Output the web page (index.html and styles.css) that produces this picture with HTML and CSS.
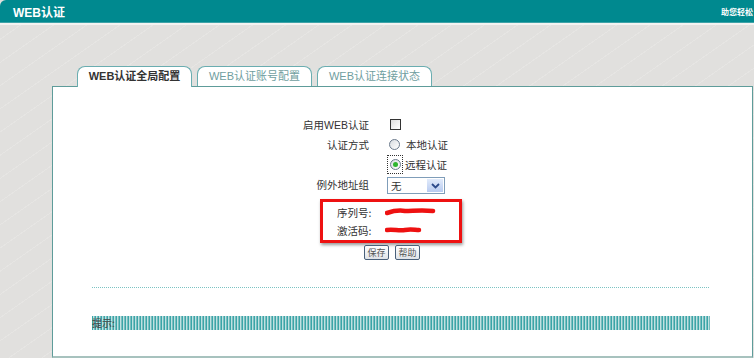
FILE: index.html
```html
<!DOCTYPE html>
<html>
	<head>
		<meta charset="UTF-8">
		<title>WEB认证</title>
		<link rel="stylesheet" href="styles.css">
	</head>
	<body>
		<div class="top">
			<span class="title">WEB认证</span>
			<span class="slogan">助您轻松</span>
		</div>
		<div class="main">
			<ul class="tabs">
				<li class="current">WEB认证全局配置</li>
				<li>WEB认证账号配置</li>
				<li>WEB认证连接状态</li>
			</ul>
			<div class="panel">
				<div class="form">
					<div class="lab">启用WEB认证</div>
					<div class="ctl"><span class="chk"></span></div>
					<div class="lab">认证方式</div>
					<div class="ctl"><span class="radio"></span><span class="opt">本地认证</span></div>
					<div class="lab"></div>
					<div class="ctl"><span class="focus"><span class="radio on"></span></span><span class="opt">远程认证</span></div>
					<div class="lab">例外地址组</div>
					<div class="ctl">
						<span class="sel"><span class="val">无</span><span class="arr"><svg width="9" height="6" viewBox="0 0 9 6"><path d="M1 1 L4.5 4.5 L8 1" fill="none" stroke="#2c4a8a" stroke-width="1.8"/></svg></span></span>
					</div>
				</div>
				<div class="license">
					<div class="row">
						<span class="k">序列号:</span>
						<svg width="52" height="8" viewBox="0 0 52 8"><path d="M2 5 C8 3 14 2 20 3 C28 3 36 2 48 3" fill="none" stroke="#ee1111" stroke-width="4.5" stroke-linecap="round"/></svg>
					</div>
					<div class="row">
						<span class="k">激活码:</span>
						<svg width="52" height="8" viewBox="0 0 52 8"><path d="M2 4 C8 3 14 5 20 4 C26 3 30 4 34 4" fill="none" stroke="#ee1111" stroke-width="4.5" stroke-linecap="round"/></svg>
					</div>
				</div>
				<div class="btns">
					<span class="btn">保存</span>
					<span class="btn">帮助</span>
				</div>
				<div class="dots"></div>
				<div class="hint">提示:</div>
			</div>
		</div>
	</body>
</html>
```
FILE: styles.css
```css
*{
	padding: 0;
	margin: 0;
}
body{
	width: 754px;
	height: 358px;
	overflow: hidden;
	background: #e1e0de;
	font-family: "Noto Sans CJK SC", "Liberation Sans", sans-serif;
	font-size: 11px;
	color: #333;
}
ul{
	list-style: none;
}
.top{
	height: 22px;
	background: #00898f;
	border-top-left-radius: 6px;
	border-bottom: 1px solid #3fa3a8;
	display: flex;
	align-items: center;
	color: white;
}
.title{
	margin-left: 13px;
	font-family: "Liberation Sans", "Noto Sans CJK SC", sans-serif;
	font-weight: bold;
	font-size: 12px;
}
.slogan{
	margin-left: auto;
	margin-right: 1px;
	font-size: 8px;
	font-weight: bold;
	white-space: nowrap;
}
.main{
	border-top: 2px solid #f3f3f1;
	padding-top: 41px;
	height: 292px;
	background: repeating-linear-gradient(-35deg, #e1e0de 0 9px, #e6e5e3 9px 10px, #e1e0de 10px 19px);
}
.tabs{
	display: flex;
	gap: 5px;
	margin-left: 77px;
	position: relative;
	z-index: 1;
}
.tabs li{
	width: 113px;
	height: 19px;
	border: 1px solid #6aadb0;
	border-bottom: none;
	border-radius: 8px 8px 0 0;
	background: white;
	text-align: center;
	line-height: 19px;
	color: #6f9ea0;
	font-family: "Liberation Sans", "Noto Sans CJK SC", sans-serif;
}
.tabs li.current{
	color: #333;
	font-weight: bold;
	height: 20px;
	margin-bottom: -1px;
}
.panel{
	margin-left: 52px;
	width: 699px;
	height: 269px;
	background: white;
	border: 1px solid #5e9c9a;
	border-bottom: 2px solid #a7c2be;
}
.form{
	display: grid;
	grid-template-columns: 316px auto;
	grid-auto-rows: 20px;
	column-gap: 18px;
	align-items: center;
	padding-top: 27px;
	font-size: 10.5px;
}
.form .lab{
	text-align: right;
	font-family: "Liberation Sans", "Noto Sans CJK SC", sans-serif;
}
.ctl{
	display: flex;
	align-items: center;
}
.chk{
	width: 9px;
	height: 9px;
	margin-left: 3px;
	border: 1px solid #333;
	background: linear-gradient(135deg, #dcdcdc, #fff);
}
.radio{
	width: 9px;
	height: 9px;
	margin-left: 2px;
	border: 1px solid #6b7a8c;
	border-radius: 50%;
	background: linear-gradient(135deg, #d8dce0, #fff);
	display: flex;
	align-items: center;
	justify-content: center;
}
.radio.on::after{
	content: "";
	width: 5px;
	height: 5px;
	border-radius: 50%;
	background: #2fb52f;
}
.focus{
	width: 14px;
	height: 17px;
	border: 1px dotted #333;
	display: flex;
	align-items: center;
}
.opt{
	margin-left: 6px;
}
.ctl .focus + .opt{
	margin-left: 2px;
}
.sel{
	width: 56px;
	height: 15px;
	border: 1px solid #7f9db9;
	display: flex;
	align-items: center;
	justify-content: space-between;
	margin-top: 3px;
}
.val{
	margin-left: 3px;
}
.arr{
	width: 16px;
	height: 13px;
	margin-right: 1px;
	background: linear-gradient(#e2ebfb, #b8cbf0);
	display: flex;
	align-items: center;
	justify-content: center;
}
.license{
	width: 136px;
	height: 37px;
	margin: 5px 0 0 267px;
	border: 3px solid #ee1111;
	box-shadow: 1px 2px 3px #999;
	padding-top: 1px;
	font-size: 10.5px;
}
.license .row{
	height: 18px;
	display: flex;
	align-items: center;
	padding-left: 14px;
}
.license .k{
	width: 48px;
}
.btns{
	display: flex;
	gap: 6px;
	margin: 2px 0 0 311px;
}
.btn{
	width: 23px;
	height: 13px;
	border: 1px solid #49607a;
	border-radius: 2px;
	background: linear-gradient(#fff, #dfe3e8);
	font-size: 9px;
	line-height: 13px;
	text-align: center;
	color: #555;
}
.dots{
	width: 618px;
	height: 1px;
	margin: 27px 0 0 39px;
	background: repeating-linear-gradient(90deg, #7cc3c3 0 1px, #fff 1px 2px);
}
.hint{
	width: 618px;
	height: 14px;
	margin: 28px 0 0 39px;
	line-height: 14px;
	font-size: 10px;
	color: #444;
	background: repeating-linear-gradient(90deg, #3aa6a8 0 1px, #bfe2e2 1px 2px, #7cbcbf 2px 3px);
}
```
